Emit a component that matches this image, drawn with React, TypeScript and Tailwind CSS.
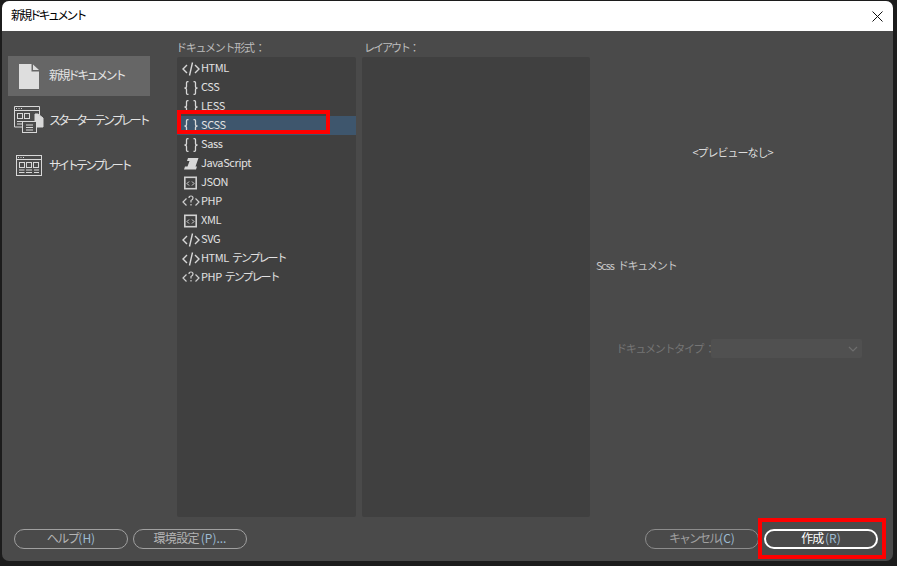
import { ReactNode } from 'react'

const FONT = "font-['Noto_Sans_CJK_JP',sans-serif]"

function CodeIcon() {
  return (
    <svg width="18" height="14" viewBox="0 0 18 14" fill="none" stroke="#d8d8d8" strokeWidth="1.4">
      <path d="M5 3 1 7l4 4M13 3l4 4-4 4M10.500 .5 7.500 13.500" />
    </svg>
  )
}

function BraceIcon() {
  return (
    <svg width="18" height="14" viewBox="0 0 18 14" fill="none" stroke="#d8d8d8" strokeWidth="1.3">
      <path d="M6.500 .7H5.500Q4.500 .7 4.500 1.700V5.500Q4.500 7 2.500 7 4.500 7 4.500 8.500V12.300Q4.500 13.300 5.500 13.300H6.500" />
      <path d="M11.500 .7H12.500Q13.500 .7 13.500 1.700V5.500Q13.500 7 15.500 7 13.500 7 13.500 8.500V12.300Q13.500 13.300 12.500 13.300H11.500" />
    </svg>
  )
}

function ScriptIcon() {
  return (
    <svg width="18" height="14" viewBox="0 0 18 14" fill="#d8d8d8">
      <path d="M6 1h10.500l-3 8.500H15l-1 3H2l1-3h2.500L7.500 4H5Z" />
    </svg>
  )
}

function BoxIcon() {
  return (
    <svg width="18" height="14" viewBox="0 0 18 14" fill="none">
      <rect x="2.800" y="1.300" width="11.400" height="11.400" stroke="#d0d0d0" strokeWidth="1.600" />
      <path d="M7 5.500 5 7.500l2 2M10 5.500l2 2-2 2" stroke="#d8d8d8" strokeWidth="1" />
    </svg>
  )
}

function PhpIcon() {
  return (
    <svg width="18" height="14" viewBox="0 0 18 14" fill="none" stroke="#cfcfcf" strokeWidth="1.2">
      <path d="M4.500 3.500 1 7l3.500 3.500M13.500 3.500 17 7l-3.500 3.500" />
      <path d="M7 3Q7 1 9 1T11 3Q11 4.500 9 5.500V7.500" />
      <path d="M9 9v1.500" />
    </svg>
  )
}

const formats: { name: string; suffix?: string; icon: ReactNode }[] = [
  { name: 'HTML', icon: <CodeIcon /> },
  { name: 'CSS', icon: <BraceIcon /> },
  { name: 'LESS', icon: <BraceIcon /> },
  { name: 'SCSS', icon: <BraceIcon /> },
  { name: 'Sass', icon: <BraceIcon /> },
  { name: 'JavaScript', icon: <ScriptIcon /> },
  { name: 'JSON', icon: <BoxIcon /> },
  { name: 'PHP', icon: <PhpIcon /> },
  { name: 'XML', icon: <BoxIcon /> },
  { name: 'SVG', icon: <CodeIcon /> },
  { name: 'HTML', suffix: 'テンプレート', icon: <CodeIcon /> },
  { name: 'PHP', suffix: 'テンプレート', icon: <PhpIcon /> },
]

function PageIcon() {
  return (
    <svg width="20" height="25" viewBox="0 0 20 25" fill="#dedede">
      <path d="M0 0h12.500v7.500H20V25H0Z" />
      <path d="M14 .5 20 6h-6Z" />
    </svg>
  )
}

function StarterIcon() {
  return (
    <svg width="30" height="28" viewBox="0 0 30 28" fill="none" stroke="#d8d8d8" strokeWidth="1">
      <path d="M.5 21V.5h25V9" />
      <path d="M.5 4.500h25" />
      <path d="M2 2.500h1M4.500 2.500h1M7 2.500h1" />
      <rect x="3.500" y="7.500" width="5" height="5" />
      <rect x="10.500" y="7.500" width="5" height="5" />
      <path d="M3 15.500h5M3 18h5M.5 21H8" />
      <path d="M21 8h3l5 4v9h-8Z" fill="#d8d8d8" />
      <rect x="8.500" y="15.500" width="14" height="11" fill="#4a4a4a" />
      <path d="M12 19h7M12 21.500h7M12 24h7" />
    </svg>
  )
}

function SiteIcon() {
  return (
    <svg width="26" height="21" viewBox="0 0 26 21" fill="none" stroke="#d8d8d8" strokeWidth="1">
      <rect x=".5" y=".5" width="25" height="20" />
      <path d="M.5 4.500h25" />
      <path d="M2 2.500h1M4.500 2.500h1M7 2.500h1" />
      <rect x="3.500" y="7.500" width="5" height="5" />
      <rect x="10.500" y="7.500" width="5" height="5" />
      <rect x="17.500" y="7.500" width="5" height="5" />
      <path d="M3 15h5.500M10 15h6M18 15h5M3 17.500h5.500M10 17.500h6M18 17.500h5" />
    </svg>
  )
}

function SideItem({ icon, label, active }: { icon: ReactNode; label: string; active?: boolean }) {
  return (
    <div className={`flex h-10 w-[142px] items-center whitespace-nowrap ${active ? 'bg-[#666666]' : ''}`}>
      <div className="flex w-[41px] shrink-0 justify-center pl-[1px]">{icon}</div>
      <span className={`text-[12px] text-[#e4e4e4] ${active ? 'pb-[2px] tracking-[-2.6px]' : 'tracking-[-3px]'}`}>{label}</span>
    </div>
  )
}

function Pill({ label, mnemonic, className }: { label: string; mnemonic: string; className: string }) {
  return (
    <button className={`flex h-5 w-[114px] items-center justify-center whitespace-pre rounded-full border pb-[2px] text-[12px] ${className}`}>
      {label}
      <span className="tracking-normal text-[#9cbbd2]">{mnemonic}</span>
    </button>
  )
}

export default function App() {
  return (
    <div className={`${FONT} relative h-[566px] w-[897px] overflow-hidden bg-[#1c1c1c] pb-[5px] pl-[2px] pr-[4px] pt-[1px]`}>
      <div className="flex h-full flex-col overflow-hidden rounded-[7px] bg-[#4a4a4a]">
        <div className="flex h-[30px] shrink-0 items-center justify-between bg-white pl-[9px] pr-[10px] text-black">
          <span className="pb-[2px] text-[12px] tracking-[-2.8px]">新規ドキュメント</span>
          <svg width="11" height="11" viewBox="0 0 11 11" fill="none" stroke="#111" strokeWidth="1">
            <path d="M.5.5l10 10M10.500.5l-10 10" />
          </svg>
        </div>

        <div className="flex min-h-0 flex-1">
          <div className="w-[175px] shrink-0 pl-[6px] pt-[25px]">
            <SideItem active icon={<PageIcon />} label="新規ドキュメント" />
            <div className="mt-[4px]">
              <SideItem icon={<StarterIcon />} label="スターターテンプレート" />
            </div>
            <div className="mt-[5px]">
              <SideItem icon={<SiteIcon />} label="サイトテンプレート" />
            </div>
          </div>

          <div className="flex w-[179px] shrink-0 flex-col pt-[8px]">
            <div className="-ml-[1px] h-[18px] whitespace-nowrap text-[11px] tracking-[-1.3px] text-[#bdbdbd]">ドキュメント形式 ：</div>
            <div className="h-[460px] rounded-[2px] bg-[#404040] pt-[2px]">
              {formats.map((f) => (
                <div
                  key={f.name + (f.suffix ?? '')}
                  className={`flex h-[19px] items-center whitespace-pre pl-[3px] ${f.name === 'SCSS' ? 'bg-[#3e566d]' : ''}`}
                >
                  <div className="flex w-[21px] shrink-0 justify-center">{f.icon}</div>
                  <span className="pb-[2px] text-[11px] tracking-[-0.4px] text-[#e2e2e2]">
                    {f.name}
                    {f.suffix && <span className="ml-[3px] tracking-[-2px]">{f.suffix}</span>}
                  </span>
                </div>
              ))}
            </div>
          </div>

          <div className="ml-[6px] flex w-[228px] shrink-0 flex-col pt-[8px]">
            <div className="h-[18px] pl-[2px] text-[11px] tracking-[-2px] text-[#bdbdbd]">レイアウト：</div>
            <div className="h-[460px] rounded-[2px] bg-[#404040]" />
          </div>

          <div className="flex min-w-0 flex-1 flex-col pl-[6px]">
            <div className="mt-[113px] pr-[24px] text-center text-[11px] tracking-[-1px] text-[#dcdcdc]">&lt;プレビューなし&gt;</div>
            <div className="mt-[96px] text-[11px] tracking-[-1.2px] text-[#c8c8c8]">
              Scss<span className="ml-[4px]">ドキュメント</span>
            </div>
            <div className="mt-[66px] flex items-center pl-[20px]">
              <span className="w-[95px] whitespace-nowrap pb-[1px] text-[11px] tracking-[-1.3px] text-[#757575]">ドキュメントタイプ ：</span>
              <div className="flex h-[19px] w-[151px] items-center justify-end rounded-[2px] bg-[#505050] pr-[4px]">
                <svg width="10" height="6" viewBox="0 0 10 6" fill="none" stroke="#6e6e6e" strokeWidth="1.2">
                  <path d="M1 1l4 4 4-4" />
                </svg>
              </div>
            </div>
          </div>
        </div>

        <div className="flex h-[44px] shrink-0 items-start justify-between pl-[12px] pr-[15px] pt-[12px]">
          <div className="flex gap-[5px]">
            <Pill label="ヘルプ" mnemonic="(H)" className="border-[#a0a0a0] tracking-[-1.5px] text-[#b4b4b4]" />
            <Pill label="環境設定 " mnemonic="(P)..." className="border-[#a0a0a0] tracking-[-0.7px] text-[#b4b4b4]" />
          </div>
          <div className="flex gap-[5px]">
            <Pill label="キャンセル" mnemonic="(C)" className="border-[#8c8c8c] tracking-[-2px] text-[#a0a0a0]" />
            <Pill label="作成 " mnemonic="(R)" className="border-2 border-white tracking-[-1px] text-white" />
          </div>
        </div>
      </div>

      <div className="absolute left-[177px] top-[110px] h-[24px] w-[153px] border-4 border-[#ff0000]" />
      <div className="absolute left-[758px] top-[518px] h-[41px] w-[128px] border-4 border-[#ff0000]" />
    </div>
  )
}
